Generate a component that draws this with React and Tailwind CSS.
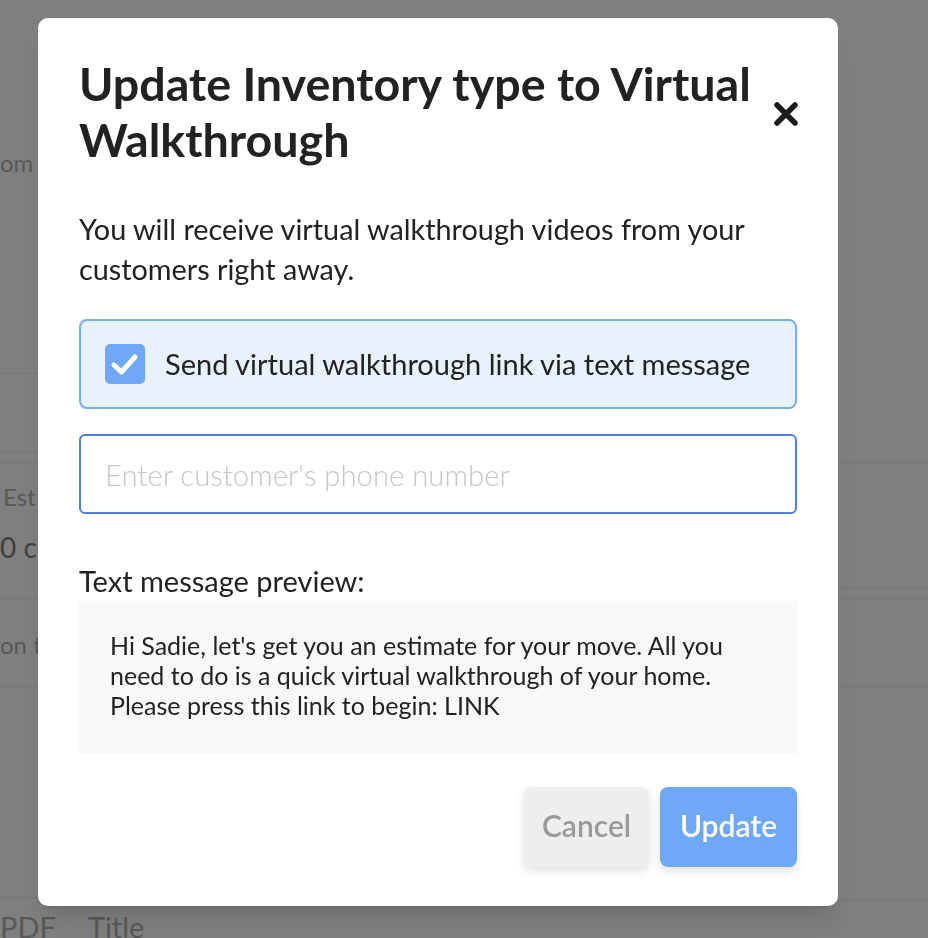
import React, { useState } from "react";

const BackgroundPage = () => {
  return (
    <div className="min-h-screen bg-white grid grid-cols-2 text-[#b0b0b0]" style={{ fontFamily: "Lato, sans-serif" }}>
      <div className="flex flex-col">
        <div className="h-[374px] border-b border-[#ececec] pt-[145px] text-[24px]">om</div>
        <div className="h-[79px] border-b border-[#ececec]"></div>
        <div className="h-[10px] border-b border-[#ececec]"></div>
        <div className="h-[136px] border-b border-[#ececec] pt-[8px] pl-[3px] text-[24px] leading-[51px]">
          <div>Est</div>
          <div className="text-[#808080] text-[28px] -ml-[3px]">0 c</div>
        </div>
        <div className="h-[88px] border-b border-[#ececec] pt-[28px] text-[24px]">on t</div>
        <div className="h-[211px] border-b border-[#ececec]"></div>
        <div className="flex gap-[32px] pt-[11px] text-[29px] leading-[36px]">
          <span>PDF</span>
          <span>Title</span>
        </div>
      </div>
      <div className="flex flex-col">
        <div className="h-[463px] border-b border-[#ececec]"></div>
        <div className="h-[126px] border-b border-[#ececec]"></div>
        <div className="h-[10px] border-b border-[#ececec]"></div>
        <div className="h-[88px] border-b border-[#ececec]"></div>
        <div className="h-[213px] border-b border-[#ececec]"></div>
      </div>
    </div>
  );
};

const App = () => {
  const [sendText, setSendText] = useState(true);
  const [phone, setPhone] = useState("");

  return (
    <div className="relative min-h-screen overflow-hidden">
      <BackgroundPage />

      <div className="fixed inset-0 bg-black/50 pt-[18px] pl-[38px]">
        <div
          className="w-[800px] h-[888px] bg-white rounded-[10px] shadow-xl px-[41px] pt-[37px] text-[#222]"
          style={{ fontFamily: "Lato, sans-serif" }}
        >
          <div className="flex items-start justify-between">
            <h2 className="text-[46.6px] font-bold leading-[56px] w-[690px]">
              Update Inventory type to Virtual Walkthrough
            </h2>
            <button className="mt-[47px] mr-[-1px] w-[24px] h-[24px]">
              <svg viewBox="0 0 24 24" width="24" height="24">
                <path d="M3 3 L21 21 M21 3 L3 21" stroke="#1c1c1c" strokeWidth="5.5" strokeLinecap="round" />
              </svg>
            </button>
          </div>

          <p className="mt-[42px] text-[28.8px] leading-[40px]">
            You will receive virtual walkthrough videos from your customers right away.
          </p>

          <label className="mt-[30px] h-[90px] flex items-center bg-[#e8f2fd] border-2 border-[#78adf3] rounded-[8px] pl-[24px] cursor-pointer">
            <input
              type="checkbox"
              className="hidden"
              checked={sendText}
              onChange={(e) => setSendText(e.target.checked)}
            />
            <span
              className={
                "w-[40px] h-[40px] rounded-[5px] flex items-center justify-center " +
                (sendText ? "bg-[#6fa8f6]" : "bg-white border-2 border-[#6fa8f6]")
              }
            >
              {sendText && (
                <svg viewBox="0 0 40 40" width="40" height="40">
                  <path d="M9 21 L16.5 28 L30 13" fill="none" stroke="white" strokeWidth="5" strokeLinecap="round" strokeLinejoin="round" />
                </svg>
              )}
            </span>
            <span className="ml-[20px] text-[29px]">Send virtual walkthrough link via text message</span>
          </label>

          <input
            type="text"
            value={phone}
            onChange={(e) => setPhone(e.target.value)}
            placeholder="Enter customer's phone number"
            className="mt-[25px] w-full h-[80px] border-2 border-[#4f7fd6] rounded-[6px] px-[24px] text-[29.3px] font-light outline-none placeholder:text-[#c6c6c6]"
          />

          <div className="mt-[47px] text-[29px] leading-[40px]">
            Text message preview:
          </div>
          <div className="h-[153px] bg-[#f9f9f9] pl-[31px] pr-[47px] pt-[29px] text-[25px] leading-[30px]">
            Hi Sadie, let's get you an estimate for your move. All you need to do is a quick virtual walkthrough of your home. Please press this link to begin: LINK
          </div>

          <div className="mt-[33px] flex justify-end gap-[11px]">
            <button className="w-[125px] h-[80px] rounded-[8px] bg-[#eeeeee] text-[#9a9a9a] text-[30px] font-semibold pb-[3px] shadow-[0_4px_10px_rgba(0,0,0,0.12)]">
              Cancel
            </button>
            <button className="w-[137px] h-[80px] rounded-[8px] bg-[#6fa8f7] text-white text-[30px] font-semibold pb-[3px] shadow-[0_4px_10px_rgba(0,0,0,0.12)]">
              Update
            </button>
          </div>
        </div>
      </div>
    </div>
  );
};

export default App;
